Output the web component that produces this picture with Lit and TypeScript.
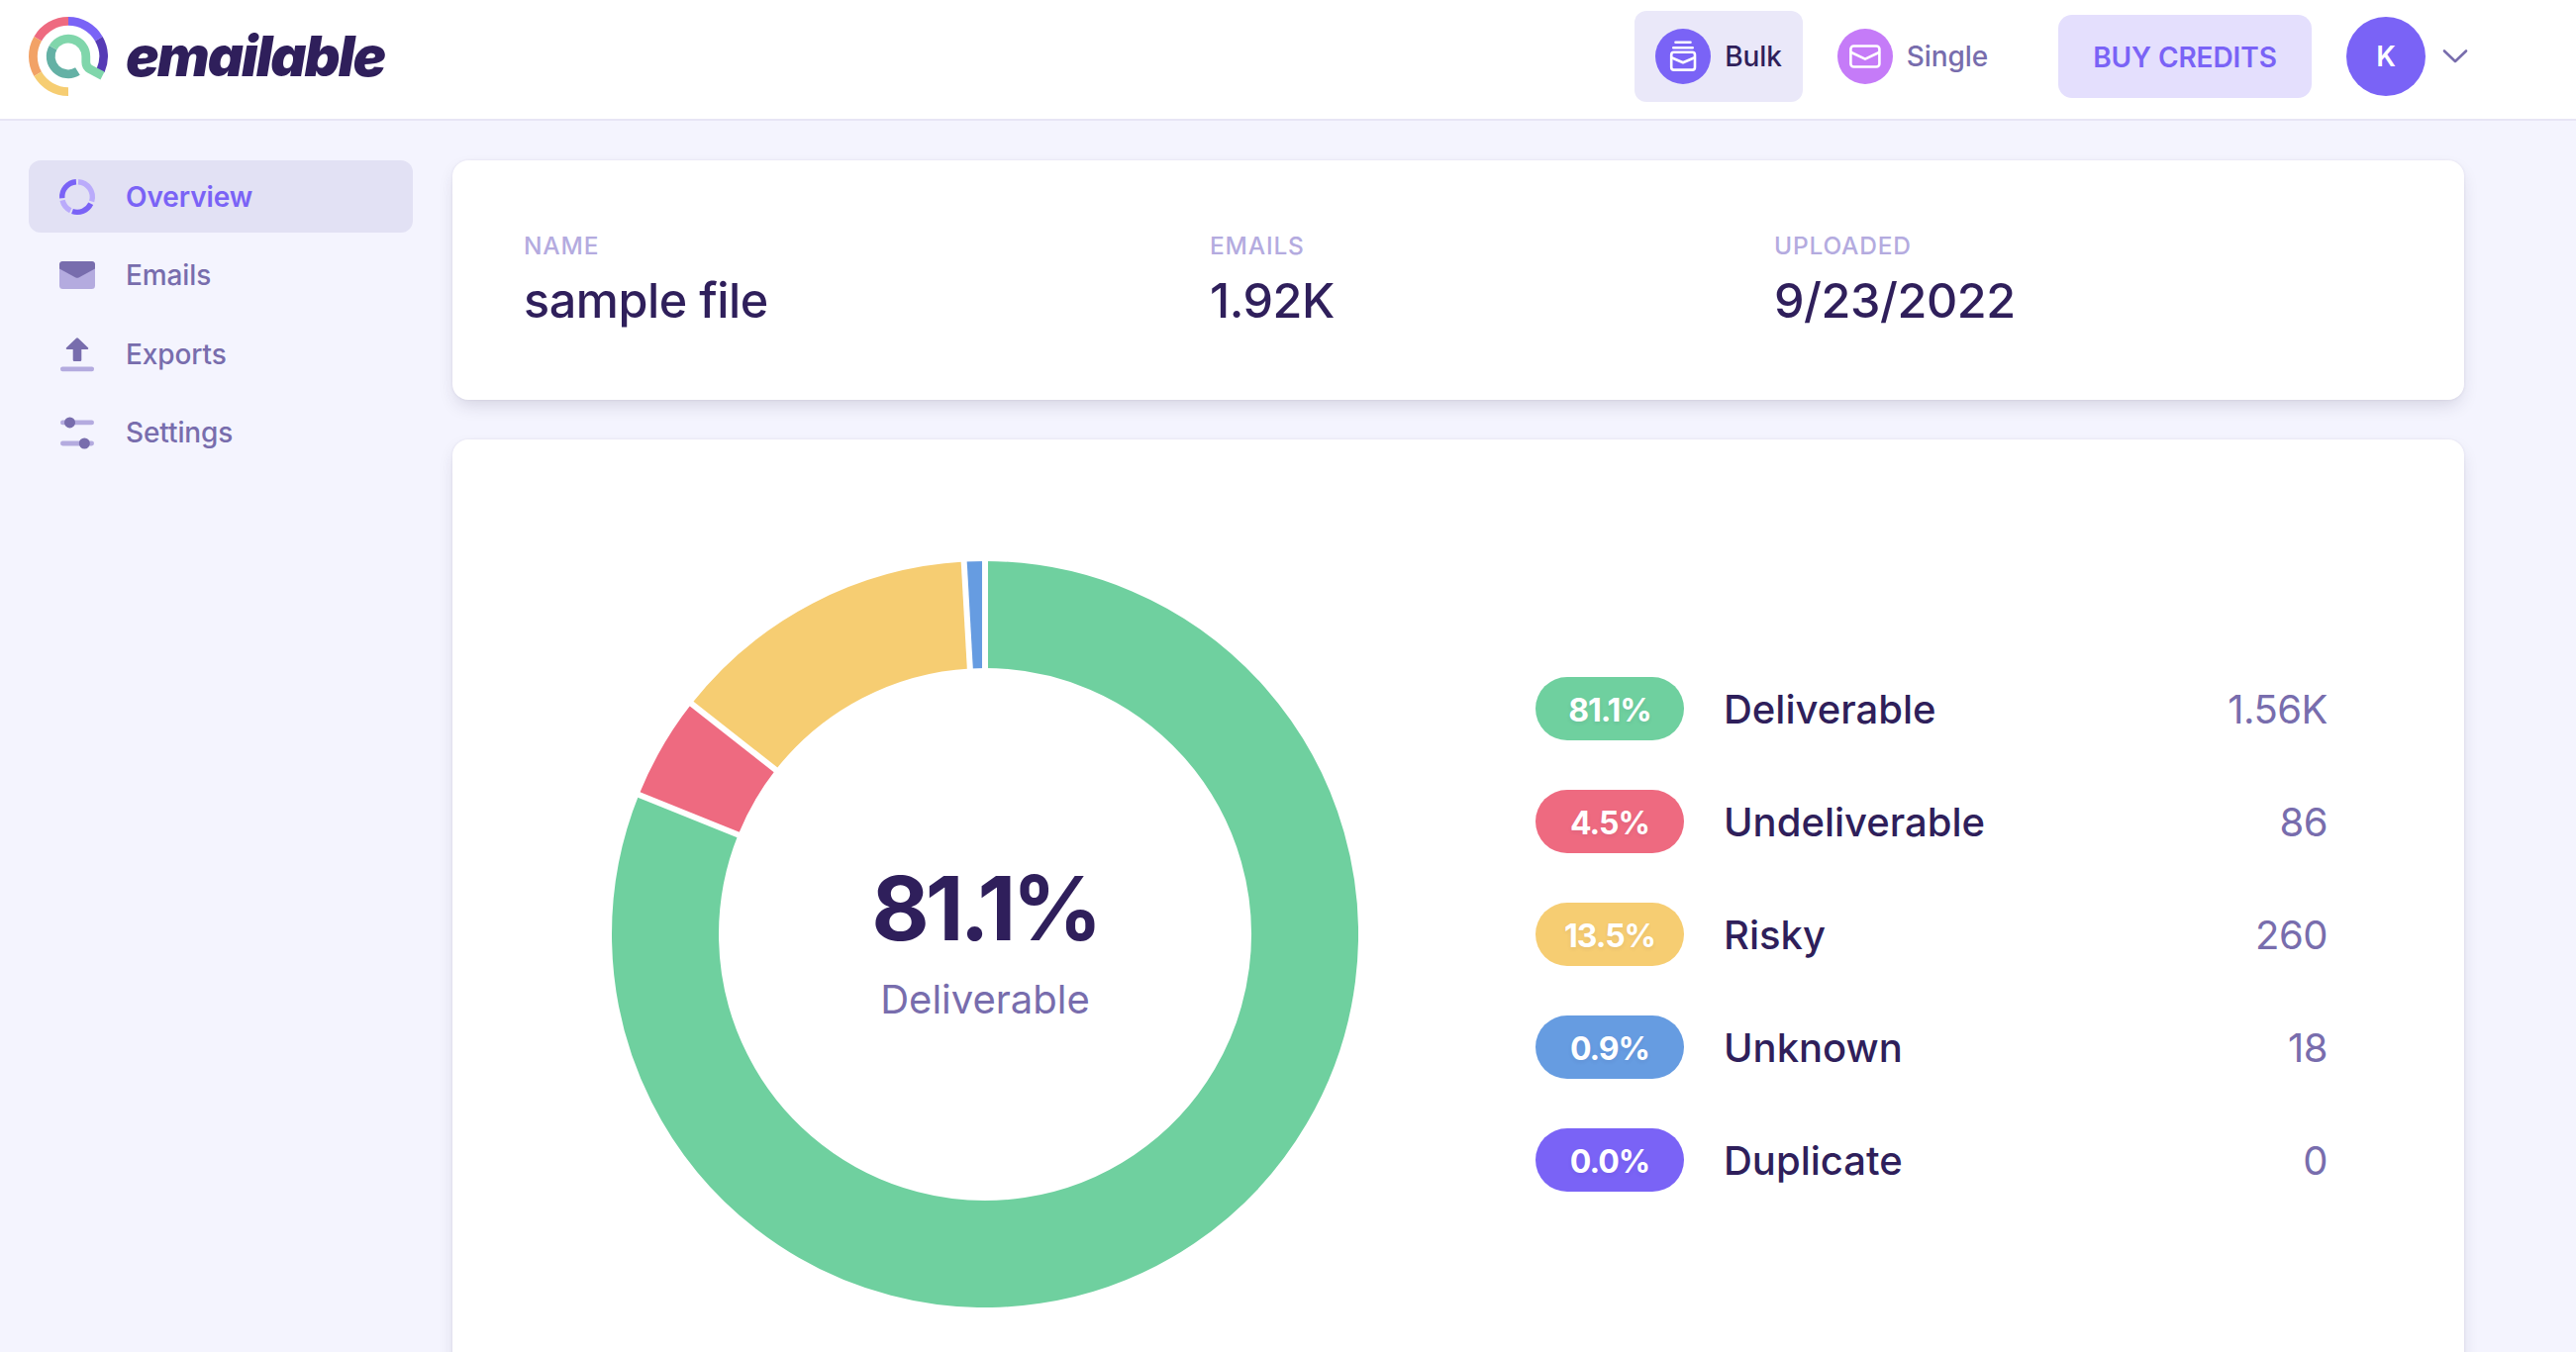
import { LitElement, html, svg, css } from "lit";
import { customElement, property } from "lit/decorators.js";

interface Result {
  label: string;
  percent: number;
  count: string;
  color: string;
}

const RESULTS: Result[] = [
  { label: "Deliverable", percent: 81.1, count: "1.56K", color: "#6fd09f" },
  { label: "Undeliverable", percent: 4.5, count: "86", color: "#ee6a80" },
  { label: "Risky", percent: 13.5, count: "260", color: "#f6cd72" },
  { label: "Unknown", percent: 0.9, count: "18", color: "#669ce1" },
  { label: "Duplicate", percent: 0, count: "0", color: "#7a63f6" },
];

// point on a circle, angle in degrees clockwise from the top
const point = (cx: number, cy: number, r: number, deg: number) => {
  const a = (deg * Math.PI) / 180;
  return `${(cx + r * Math.sin(a)).toFixed(2)} ${(cy - r * Math.cos(a)).toFixed(2)}`;
};

const arc = (cx: number, cy: number, r: number, from: number, to: number) =>
  `M${point(cx, cy, r, from)}A${r} ${r} 0 ${to - from > 180 ? 1 : 0} 1 ${point(cx, cy, r, to)}`;

@customElement("app-logo")
export class AppLogo extends LitElement {
  static override styles = css`
    :host {
      display: flex;
      align-items: center;
      gap: 18px;
    }
    .mark {
      display: block;
      width: 80px;
      height: 80px;
      fill: none;
      stroke-width: 8.8;
    }
    .word {
      font-size: 56px;
      font-weight: 900;
      font-style: italic;
      line-height: 60px;
      letter-spacing: -1.9px;
      font-feature-settings: "cv11";
      color: #2f1f5b;
    }
  `;

  override render() {
    return html`
      <svg class="mark" viewBox="0 0 80 80">
        <path d=${arc(40, 40, 35.6, 300, 360)} stroke="#ee6a80" />
        <path d=${arc(40, 40, 35.6, 0, 60)} stroke="#7a63f6" />
        <path d=${arc(40, 40, 35.6, 60, 114)} stroke="#563bb5" />
        <path d=${arc(40, 40, 35.6, 240, 300)} stroke="#f2a266" />
        <path d=${arc(40, 40, 35.6, 180, 240)} stroke="#f6cd72" />
        <path d=${arc(40, 40, 17.8, 148, 300)} stroke="#64b1a5" />
        <path d="${arc(40, 40, 17.8, 300, 450)}V46Q57.8 50.5 62 53L74.5 59.5" stroke="#80d6ab" />
      </svg>
      <span class="word">emailable</span>
    `;
  }
}

@customElement("app-header")
export class AppHeader extends LitElement {
  static override styles = css`
    :host {
      display: flex;
      align-items: center;
      box-sizing: border-box;
      height: 122px;
      padding: 0 109px 6px 29px;
      background: #fff;
      border-bottom: 2px solid #e7e5f5;
    }
    .tabs {
      display: flex;
      margin-left: auto;
      gap: 14px;
    }
    .tab {
      display: flex;
      align-items: center;
      gap: 14px;
      box-sizing: border-box;
      height: 92px;
      padding: 0 21px;
      border-radius: 12px;
      font-size: 28px;
      font-weight: 500;
      letter-spacing: -0.1px;
      line-height: 36px;
      color: #786dad;
    }
    .tab.active {
      background: #eae8f9;
      color: #2f1f5b;
    }
    .tab svg {
      display: block;
      width: 56px;
      height: 56px;
      fill: none;
      stroke: #fff;
      stroke-width: 2.6;
      stroke-linecap: round;
      stroke-linejoin: round;
    }
    .buy {
      box-sizing: border-box;
      width: 256px;
      height: 84px;
      margin-left: 50px;
      border: 0;
      border-radius: 14px;
      background: #e4dffd;
      font: 600 28px/84px Inter, sans-serif;
      letter-spacing: -0.1px;
      text-align: center;
      color: #7a63f6;
    }
    .avatar {
      width: 80px;
      height: 80px;
      margin-left: 35px;
      border-radius: 50%;
      background: #7a63f6;
      font-size: 28px;
      font-weight: 600;
      line-height: 81px;
      text-align: center;
      color: #fff;
    }
    .chevron {
      width: 26px;
      height: 16px;
      margin-left: 17px;
      fill: none;
      stroke: #786dad;
      stroke-width: 2.6;
      stroke-linecap: round;
      stroke-linejoin: round;
    }
  `;

  override render() {
    return html`
      <app-logo></app-logo>
      <div class="tabs">
        <div class="tab active">
          <svg viewBox="0 0 56 56">
            <circle cx="28" cy="28" r="28" fill="#7a63f6" stroke="none" />
            <path d="M20.5 13.8H35.5M18.3 19.2H37.7" />
            <rect x="16.2" y="23.8" width="23.8" height="17.8" rx="2.6" />
            <path d="M17 29.5L28 34.2L39 29.5" />
          </svg>
          <span>Bulk</span>
        </div>
        <div class="tab">
          <svg viewBox="0 0 56 56">
            <circle cx="28" cy="28" r="28" fill="#c57bf8" stroke="none" />
            <rect x="13.4" y="17.5" width="29" height="21" rx="3" />
            <path d="M14 24L28 30.6L42 24" />
          </svg>
          <span>Single</span>
        </div>
      </div>
      <button class="buy">BUY CREDITS</button>
      <div class="avatar">K</div>
      <svg class="chevron" viewBox="0 0 26 16"><path d="M2 2.5L13 13L24 2.5" /></svg>
    `;
  }
}

@customElement("app-sidebar")
export class AppSidebar extends LitElement {
  static override styles = css`
    :host {
      display: flex;
      flex-direction: column;
      gap: 6.6px;
      width: 388px;
    }
    .item {
      display: flex;
      align-items: center;
      gap: 29px;
      box-sizing: border-box;
      height: 73px;
      padding-left: 29px;
      border-radius: 12px;
      font-size: 28px;
      font-weight: 500;
      letter-spacing: -0.1px;
      color: #786dad;
    }
    .item.active {
      background: #e2e1f4;
      color: #7a63f6;
      font-weight: 600;
    }
    .item svg {
      display: block;
      width: 40px;
      height: 40px;
    }
  `;

  private items = [
    {
      label: "Overview",
      icon: svg`
        <g fill="none" stroke-width="5.4">
          <path d=${arc(20, 20, 15.3, 4, 107)} stroke="#baabfb" />
          <path d=${arc(20, 20, 15.3, 116, 199)} stroke="#7a63f6" />
          <path d=${arc(20, 20, 15.3, 206, 257)} stroke="#baabfb" />
          <path d=${arc(20, 20, 15.3, 265, 356)} stroke="#7a63f6" />
        </g>`,
    },
    {
      label: "Emails",
      icon: svg`
        <rect x="2" y="6" width="36" height="28" rx="3.5" fill="#b4abdf" />
        <path d="M2 13.5V9.5Q2 6 5.5 6H34.5Q38 6 38 9.5V13.5L21.5 22.4Q20 23.2 18.5 22.4Z" fill="#786dad" />`,
    },
    {
      label: "Exports",
      icon: svg`
        <path d="M20 3.2Q20.5 3.2 21 3.8L31.2 13.6Q31.6 15 30.4 15H24.3V25.7Q24.3 27 23 27H17Q15.7 27 15.7 25.7V15H9.6Q8.4 15 8.8 13.6L19 3.8Q19.5 3.2 20 3.2Z" fill="#786dad" />
        <rect x="3" y="32.4" width="34" height="4.8" rx="2.2" fill="#b4abdf" />`,
    },
    {
      label: "Settings",
      icon: svg`
        <rect x="3" y="7.5" width="34" height="4.8" rx="2.4" fill="#b4abdf" />
        <rect x="3" y="28.6" width="34" height="4.8" rx="2.4" fill="#b4abdf" />
        <circle cx="12.5" cy="9.9" r="5.5" fill="#786dad" />
        <circle cx="27.3" cy="31" r="5.5" fill="#786dad" />`,
    },
  ];

  override render() {
    return this.items.map(
      (item, i) => html`
        <div class="item ${i === 0 ? "active" : ""}">
          <svg viewBox="0 0 40 40">${item.icon}</svg>
          <span>${item.label}</span>
        </div>
      `
    );
  }
}

@customElement("file-summary")
export class FileSummary extends LitElement {
  static override styles = css`
    :host {
      display: grid;
      grid-template-columns: 693px 570px 1fr;
      box-sizing: border-box;
      height: 242px;
      padding: 68px 72px 0;
    }
    .label {
      font-size: 24.5px;
      font-weight: 500;
      line-height: 36px;
      letter-spacing: 0.8px;
      color: #b4abdf;
    }
    .value {
      margin-top: 8px;
      font-size: 48.5px;
      font-weight: 500;
      line-height: 60px;
      letter-spacing: -0.45px;
      color: #2f1f5b;
    }
  `;

  override render() {
    return html`
      <div>
        <div class="label">NAME</div>
        <div class="value">sample file</div>
      </div>
      <div>
        <div class="label">EMAILS</div>
        <div class="value">1.92K</div>
      </div>
      <div>
        <div class="label">UPLOADED</div>
        <div class="value">9/23/2022</div>
      </div>
    `;
  }
}

@customElement("donut-chart")
export class DonutChart extends LitElement {
  static override styles = css`
    :host {
      display: grid;
      width: 754px;
      height: 754px;
    }
    .chart,
    .center {
      grid-area: 1 / 1;
    }
    .chart {
      display: block;
      fill: none;
    }
    .center {
      display: flex;
      flex-direction: column;
      align-items: center;
      padding-top: 293px;
    }
    .percent {
      font-size: 90px;
      font-weight: 650;
      line-height: 116px;
      letter-spacing: -4px;
      color: #2f1f5b;
    }
    .label {
      margin-top: 8px;
      font-size: 40px;
      line-height: 52px;
      color: #786dad;
    }
  `;

  @property({ attribute: false })
  results: Result[] = [];

  override render() {
    let total = 0;
    const slices = this.results
      .filter((r) => r.percent > 0)
      .map((r) => {
        const from = total;
        total += r.percent * 3.6;
        return { color: r.color, from, to: total };
      });
    return html`
      <svg class="chart" viewBox="0 0 754 754">
        ${slices.map((s) => svg`<path d=${arc(377, 377, 323, s.from, s.to)} stroke=${s.color} stroke-width="108" />`)}
        ${slices.map((s) => svg`<path d="M${point(377, 377, 260, s.from)}L${point(377, 377, 385, s.from)}" stroke="#fff" stroke-width="6" />`)}
      </svg>
      <div class="center">
        <div class="percent">${this.results[0].percent}%</div>
        <div class="label">${this.results[0].label}</div>
      </div>
    `;
  }
}

@customElement("result-legend")
export class ResultLegend extends LitElement {
  static override styles = css`
    :host {
      display: flex;
      flex-direction: column;
      gap: 50px;
      width: 800px;
    }
    .row {
      display: flex;
      align-items: center;
      height: 64px;
      font-size: 40px;
    }
    .pill {
      width: 150px;
      height: 64px;
      border-radius: 32px;
      font-size: 32px;
      font-weight: 700;
      line-height: 67px;
      letter-spacing: -1px;
      text-align: center;
      text-shadow: 0 2px 4px rgba(47, 31, 91, 0.07);
      color: #fff;
    }
    .label {
      margin-left: 40px;
      font-weight: 500;
      color: #2f1f5b;
    }
    .count {
      margin-left: auto;
      letter-spacing: -0.5px;
      color: #786dad;
    }
  `;

  @property({ attribute: false })
  results: Result[] = [];

  override render() {
    return this.results.map(
      (r) => html`
        <div class="row">
          <div class="pill" style="background:${r.color}">${r.percent.toFixed(1)}%</div>
          <span class="label">${r.label}</span>
          <span class="count">${r.count}</span>
        </div>
      `
    );
  }
}

@customElement("app-root")
export class AppRoot extends LitElement {
  static override styles = css`
    :host {
      display: block;
      height: 1366px;
      overflow: hidden;
      background: #f4f4fe;
      font-family: Inter, sans-serif;
    }
    .body {
      display: flex;
      gap: 40px;
      padding: 40px 113px 0 29px;
    }
    .content {
      flex: 1;
      display: flex;
      flex-direction: column;
      gap: 40px;
    }
    .card {
      background: #fff;
      border-radius: 16px;
      box-shadow: 0 0 3px rgba(47, 31, 91, 0.08), 0 8px 18px -4px rgba(40, 35, 70, 0.17);
    }
    .results {
      display: flex;
      align-items: center;
      gap: 179px;
      box-sizing: border-box;
      height: 1000px;
      padding-left: 161px;
    }
  `;

  override render() {
    return html`
      <app-header></app-header>
      <div class="body">
        <app-sidebar></app-sidebar>
        <div class="content">
          <file-summary class="card"></file-summary>
          <div class="card results">
            <donut-chart .results=${RESULTS}></donut-chart>
            <result-legend .results=${RESULTS}></result-legend>
          </div>
        </div>
      </div>
    `;
  }
}
